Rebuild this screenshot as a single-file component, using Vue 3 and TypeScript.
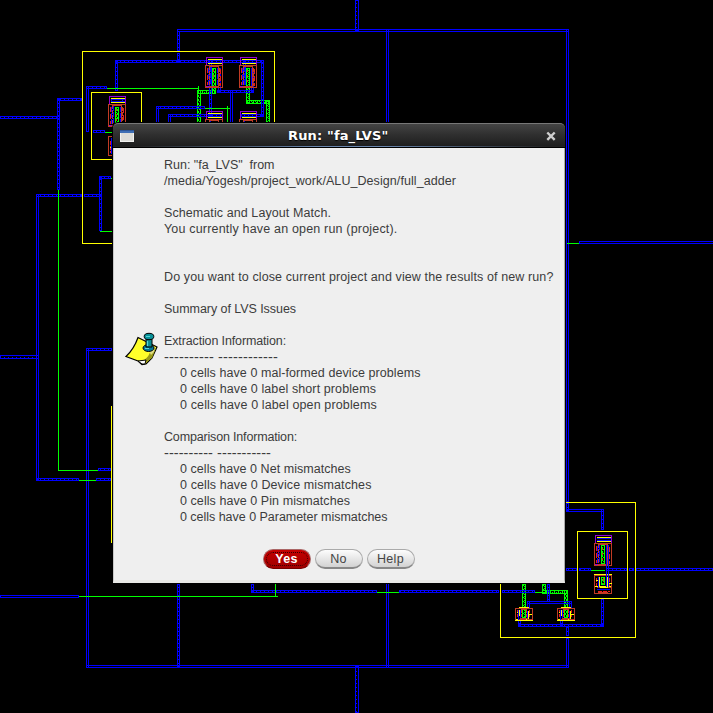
<script setup lang="ts">
type Box = [x: number, y: number, w: number, h: number]

// Metal tracks with contact rungs between their two edges
const runged: Box[] = [
  [177, 31, 3, 20], [177, 53, 3, 9], [115, 60, 149, 3], [115, 60, 3, 31], [261, 60, 3, 57],
  [168, 114, 53, 3], [241, 114, 23, 3], [156, 106, 49, 3], [209, 60, 3, 58], [218, 68, 3, 25],
  [217, 90, 37, 3], [251, 68, 3, 25], [243, 60, 3, 25], [86, 86, 21, 3], [93, 130, 12, 3],
  [0, 116, 60, 3], [57, 98, 3, 92], [57, 98, 25, 3], [36, 194, 46, 3], [84, 194, 17, 3],
  [99, 176, 3, 55], [99, 176, 12, 3], [0, 355, 39, 4], [86, 348, 26, 3], [98, 468, 13, 3],
  [36, 478, 43, 3], [96, 478, 15, 3], [177, 584, 3, 83], [251, 590, 126, 3], [251, 584, 3, 8],
  [399, 590, 100, 3], [502, 590, 33, 3], [355, 666, 4, 47], [355, 0, 4, 31],
  [566, 503, 3, 8], [601, 509, 3, 21], [601, 599, 3, 27], [518, 624, 86, 3], [566, 626, 3, 10],
  [566, 568, 11, 3], [579, 568, 12, 3], [606, 568, 21, 3], [629, 568, 5, 3], [636, 568, 77, 3],
  [527, 601, 3, 7], [569, 601, 3, 7], [547, 584, 3, 18], [518, 610, 3, 16], [560, 610, 3, 16],
]

// The rungs run across the track, so they sit in its middle row or column
function core(b: Box): Box {
  return b[2] > b[3] ? [b[0], b[1] + b[3] - 2, b[2], 1] : [b[0] + 1, b[1], 1, b[3]]
}

const plain: Box[] = [
  [177, 29, 392, 3], [86, 86, 3, 46], [156, 106, 3, 17], [168, 114, 3, 9], [230, 90, 3, 33],
  [36, 194, 3, 286], [86, 348, 3, 320], [0, 595, 79, 3], [86, 665, 483, 3], [386, 29, 3, 639],
  [566, 29, 3, 473], [566, 638, 3, 30], [579, 241, 136, 3], [566, 509, 38, 3], [527, 601, 45, 3],
]

const poly: Box[] = [
  [197, 90, 4, 33], [197, 90, 18, 4], [212, 68, 4, 26], [246, 68, 4, 35], [246, 100, 23, 4],
  [266, 100, 4, 23], [115, 107, 4, 16], [522, 584, 4, 34], [542, 584, 4, 9], [542, 590, 25, 4],
  [564, 590, 4, 28], [601, 545, 4, 19], [601, 577, 4, 8],
]

const green: Box[] = [
  [107, 88, 91, 1], [198, 86, 1, 4], [205, 108, 25, 1], [227, 106, 1, 16], [105, 132, 8, 1],
  [58, 190, 1, 280], [58, 470, 40, 1], [100, 231, 12, 1], [111, 178, 2, 1], [79, 480, 17, 1],
  [79, 596, 199, 1], [275, 584, 1, 12], [377, 592, 22, 1], [535, 592, 7, 1], [591, 570, 14, 1],
  [567, 243, 12, 1],
]

const yellow: Box[] = [
  [82, 51, 193, 193], [91, 92, 51, 68], [500, 502, 136, 136], [577, 531, 51, 68], [111, 406, 1, 137],
]

const tall: [number, number][] = [[205, 57], [239, 57], [108, 96], [594, 535], [205, 111], [239, 111]]
const small: [number, number][] = [[515, 607], [557, 607]]

interface Line { text: string; end: number; indent?: boolean; rule?: boolean }
const lines: Line[] = [
  { text: 'Run: "fa_LVS"  from', end: 274.5 },
  { text: '/media/Yogesh/project_work/ALU_Design/full_adder', end: 456 },
  { text: '', end: 0 },
  { text: 'Schematic and Layout Match.', end: 331 },
  { text: 'You currently have an open run (project).', end: 397.5 },
  { text: '', end: 0 },
  { text: '', end: 0 },
  { text: 'Do you want to close current project and view the results of new run?', end: 553.5 },
  { text: '', end: 0 },
  { text: 'Summary of LVS Issues', end: 296 },
  { text: '', end: 0 },
  { text: 'Extraction Information:', end: 286 },
  { text: '---------- ------------', end: 278, rule: true },
  { text: '0 cells have 0 mal-formed device problems', end: 420.5, indent: true },
  { text: '0 cells have 0 label short problems', end: 376, indent: true },
  { text: '0 cells have 0 label open problems', end: 376.8, indent: true },
  { text: '', end: 0 },
  { text: 'Comparison Information:', end: 297 },
  { text: '---------- -----------', end: 271, rule: true },
  { text: '0 cells have 0 Net mismatches', end: 350.8, indent: true },
  { text: '0 cells have 0 Device mismatches', end: 371.5, indent: true },
  { text: '0 cells have 0 Pin mismatches', end: 350, indent: true },
  { text: '0 cells have 0 Parameter mismatches', end: 387.5, indent: true },
]

// Tracks out each line so that its last glyph lands on the given edge
const vTrack = {
  mounted(el: HTMLElement, binding: { value: number }) {
    const count = el.textContent?.length ?? 0
    if (!count) return
    const box = el.getBoundingClientRect()
    el.style.letterSpacing = `${(binding.value - box.left - box.width) / count}px`
  },
}
</script>

<template>
  <main class="screen">
    <svg class="layout" viewBox="0 0 713 713" width="713" height="713" shape-rendering="crispEdges">
      <defs>
        <pattern id="rungs-x" width="4" height="4" patternUnits="userSpaceOnUse">
          <path class="blue" d="M0 0h1v4h-1z" />
        </pattern>
        <pattern id="rungs-y" width="4" height="4" patternUnits="userSpaceOnUse">
          <path class="blue" d="M0 3h4v1h-4z" />
        </pattern>
        <pattern id="mesh" width="4" height="4" patternUnits="userSpaceOnUse">
          <path class="lime" d="M0 0h1v1h-1zM2 0h1v1h-1zM1 1h1v1h-1zM3 1h1v1h-1zM0 2h2v1h-2zM2 3h1v1h-1z" />
        </pattern>
        <g id="tall">
          <path class="s purple" d="M1.500 8.500v-8h16v8M1 29.500h4" />
          <path class="s gold" d="M3 2.500h14M3 6.500h14" />
          <path class="s blue-line" d="M3 3.500h14M3 5.500h14" />
          <path class="s brick" d="M.5 8.500h17v22h-17zM4 9.500h10M13.500 9v21M4 29.500h10" />
          <path class="s brick" stroke-dasharray="4 1" d="M4.500 9v21M14.500 11v18" />
          <path class="s red" stroke-dasharray="5 2" d="M2.500 11v17M15.500 12v17" />
          <path class="s blue-line" stroke-dasharray="5 1" d="M3.500 11v17M5.500 10v18M12.500 11v17" />
          <path class="s red" stroke-dasharray="2 3" d="M8.500 13v14" />
        </g>
        <g id="small">
          <path class="s brick" d="M.5 1.500h17v11h-17zM6 2.500h6M5 11.500h8" />
          <path class="s red" d="M2.500 3v8M6.500 3v8M11.500 3v8M14.500 3v8" stroke-dasharray="3 1" />
          <path class="s gold" d="M4 .5h10M0 13.500h18M4.500 3v6M13.500 4v8M2 5.500h3M13 7.500h4M11 12.500h1M1 12.500h2" />
          <path class="s blue-line" d="M3.500 3v10M12.500 4v7" />
        </g>
      </defs>

      <rect v-for="(b, i) in yellow" :key="'y' + i" class="s gold"
        :x="b[0] + 0.5" :y="b[1] + 0.5" :width="b[2] - 1" :height="b[3] - 1" />
      <path class="s gold" d="M111.500 406v137" />
      <g>
        <path class="s brick" d="M112 136.500h-3.500v19h4M594.500 575.500h17v18h-17zM598 592.500h10M597 587.500h14" />
        <path class="s red" d="M110.500 141v12M596.500 578v10M603.500 578v6M609.500 578v10M598 591.500h12" stroke-dasharray="4 1" />
        <path class="s gold" d="M594 574.500h18M595 586.500h16M599.500 577v9M607.500 577v9M600 587.500h8M110 147.500h2M596 580.500h3M609 583.500h3" />
        <path class="s blue-line" d="M597 589.500h13M598.500 577v11M111.500 138v16M111 99.500h11v2h-11z" />
      </g>
      <g v-for="(b, i) in poly" :key="'p' + i">
        <rect fill="url(#mesh)" :x="b[0]" :y="b[1]" :width="b[2]" :height="b[3]" />
        <rect class="s lime-line" :x="b[0] + 0.5" :y="b[1] + 0.5" :width="b[2] - 1" :height="b[3] - 1" />
      </g>
      <g v-for="(b, i) in runged" :key="'r' + i">
        <rect :fill="b[2] > b[3] ? 'url(#rungs-x)' : 'url(#rungs-y)'"
          :x="core(b)[0]" :y="core(b)[1]" :width="core(b)[2]" :height="core(b)[3]" />
        <rect class="s blue-line" :x="b[0] + 0.5" :y="b[1] + 0.5" :width="b[2] - 1" :height="b[3] - 1" />
      </g>
      <rect v-for="(b, i) in plain" :key="'w' + i" class="s blue-line"
        :x="b[0] + 0.5" :y="b[1] + 0.5" :width="b[2] - 1" :height="b[3] - 1" />
      <use v-for="(d, i) in tall" :key="'t' + i" href="#tall" :x="d[0]" :y="d[1]" />
      <use v-for="(d, i) in small" :key="'s' + i" href="#small" :x="d[0]" :y="d[1]" />
      <path class="s blue-line" d="M606.500 545v42M608.500 545v42" />
      <rect v-for="(b, i) in green" :key="'g' + i" class="lime" :x="b[0]" :y="b[1]" :width="b[2]" :height="b[3]" />
    </svg>

    <section class="dialog">
      <header class="titlebar">
        <svg class="winicon" width="14" height="12" shape-rendering="crispEdges">
          <rect width="14" height="12" fill="#f2f2f0" />
          <rect width="14" height="3" fill="#3f6fb5" />
          <rect y="0" width="14" height="1" fill="#2c5596" />
          <rect x="1" y="3" width="12" height="8" fill="#dcdcd8" />
        </svg>
        <h1 v-track="388.5">Run: "fa_LVS"</h1>
        <svg class="close" width="10" height="10" viewBox="0 0 10 10">
          <path d="M1.300 1.500 8.700 8.900M8.700 1.500 1.300 8.900" stroke="#cfcfcf" stroke-width="2.400" />
        </svg>
      </header>
      <div class="content">
        <div class="message">
          <svg class="note" width="34" height="34" viewBox="0 0 34 34">
            <path d="M13 5.500 32 15 27 26 21 32 17 32.500 13 29 1 24.500Q9 17 13 5.500Z" fill="#ffff2a" stroke="#000" stroke-width="1.200" />
            <path d="M31 16 27 26 20 31 18 29Q25 24 26 17Z" fill="#9a9a18" />
            <path d="M13 29 21 28 20 32H17Z" fill="#fff" stroke="#000" stroke-width="1" />
            <path d="M24 19l6-4-1 5-3 3z" fill="#e0dc80" />
            <ellipse cx="23.500" cy="16" rx="5.500" ry="3.500" fill="#079" stroke="#000" />
            <path d="M21 7h6v8h-6z" fill="#088b91" stroke="#000" />
            <ellipse cx="24" cy="4.500" rx="4.800" ry="3.200" fill="#089098" stroke="#000" />
            <path d="M21 4.500h4M22.500 9v5M20 16.500h4" stroke="#55d6d8" stroke-width="1.200" />
          </svg>
          <div class="text">
            <p v-for="(line, i) in lines" :key="i" :class="{ indent: line.indent, rule: line.rule }">
              <span v-track="line.end">{{ line.text }}</span>
            </p>
          </div>
        </div>
        <footer class="actions">
          <button class="primary" type="button">Yes</button>
          <button type="button">No</button>
          <button type="button">Help</button>
        </footer>
      </div>
    </section>
  </main>
</template>

<style>
body {
  background: #000;
  overflow: hidden;
}
</style>

<style scoped>
.screen {
  position: relative;
  width: 713px;
  height: 713px;
  background: #000;
  font-family: "Liberation Sans", Arial, sans-serif;
}
.layout { display: block; }
.s { fill: none; stroke-width: 1; }
.gold { stroke: #ff0; }
.blue { fill: #00f; }
.blue-line { stroke: #00f; }
.lime { fill: #0f0; }
.lime-line { stroke: #0f0; }
.purple { stroke: #9400d3; }
.brick { stroke: #c13b24; }
.red { stroke: #f01818; }

.dialog {
  position: absolute;
  left: 112px;
  top: 122px;
  box-sizing: border-box;
  width: 454px;
  height: 462px;
  border: 1px solid #000;
  border-radius: 6px 6px 0 0;
  display: flex;
  flex-direction: column;
  background: #000;
}
.titlebar {
  box-sizing: border-box;
  height: 25px;
  flex: none;
  display: flex;
  align-items: center;
  padding: 0 9px 0 7px;
  border-radius: 5px 5px 0 0;
  border-top: 1px solid #777;
  border-bottom: 1px solid #000;
  background:
    linear-gradient(90deg, #222 5%, #6a86ad 45%, #6a86ad 60%, #222 96%) bottom / 100% 1px no-repeat,
    linear-gradient(#444, #303030 45%, #1d1d1d);
}
.winicon { flex: none; }
.titlebar h1 {
  margin: 0 auto 0 154px;
  color: #fff;
  font: bold 13px/18px "DejaVu Sans", sans-serif;
  white-space: pre;
  text-shadow: 0 1px 1px #000;
}
.close { flex: none; }
.content {
  flex: 1;
  display: flex;
  flex-direction: column;
  box-sizing: border-box;
  border-left: 1px solid #c8c8c8;
  border-right: 1px solid #aaa;
  border-bottom: 3px solid #e8e8e6;
  background: #efefef;
  padding: 9px 11px 11px 11px;
}
.message {
  display: flex;
  align-items: center;
  gap: 5px;
}
.note {
  flex: none;
  position: relative;
  top: 8px;
}
.text p {
  margin: 0;
  height: 16px;
  font-size: 12.5px;
  line-height: 16px;
  color: #3c3c3c;
  white-space: pre;
}
.text .indent { padding-left: 16px; }
.text .rule { font-size: 14.5px; }
.actions {
  display: flex;
  justify-content: center;
  gap: 4px;
  margin: auto 1px 0 0;
}
button {
  box-sizing: border-box;
  width: 48px;
  height: 20px;
  padding: 0;
  border: 1px solid #aaa;
  border-bottom: 2px solid #888;
  border-radius: 10px;
  background: linear-gradient(#fdfdfd, #d2d2d2);
  color: #444;
  font: 12.5px/16px "Liberation Sans", Arial, sans-serif;
  letter-spacing: 0.3px;
}
button.primary {
  border: 1px solid #a66;
  border-bottom-color: #700;
  background: linear-gradient(#c40000, #a00000);
  color: #fff;
  font-weight: bold;
  outline: 1px dotted #300;
  outline-offset: -4px;
}
</style>
